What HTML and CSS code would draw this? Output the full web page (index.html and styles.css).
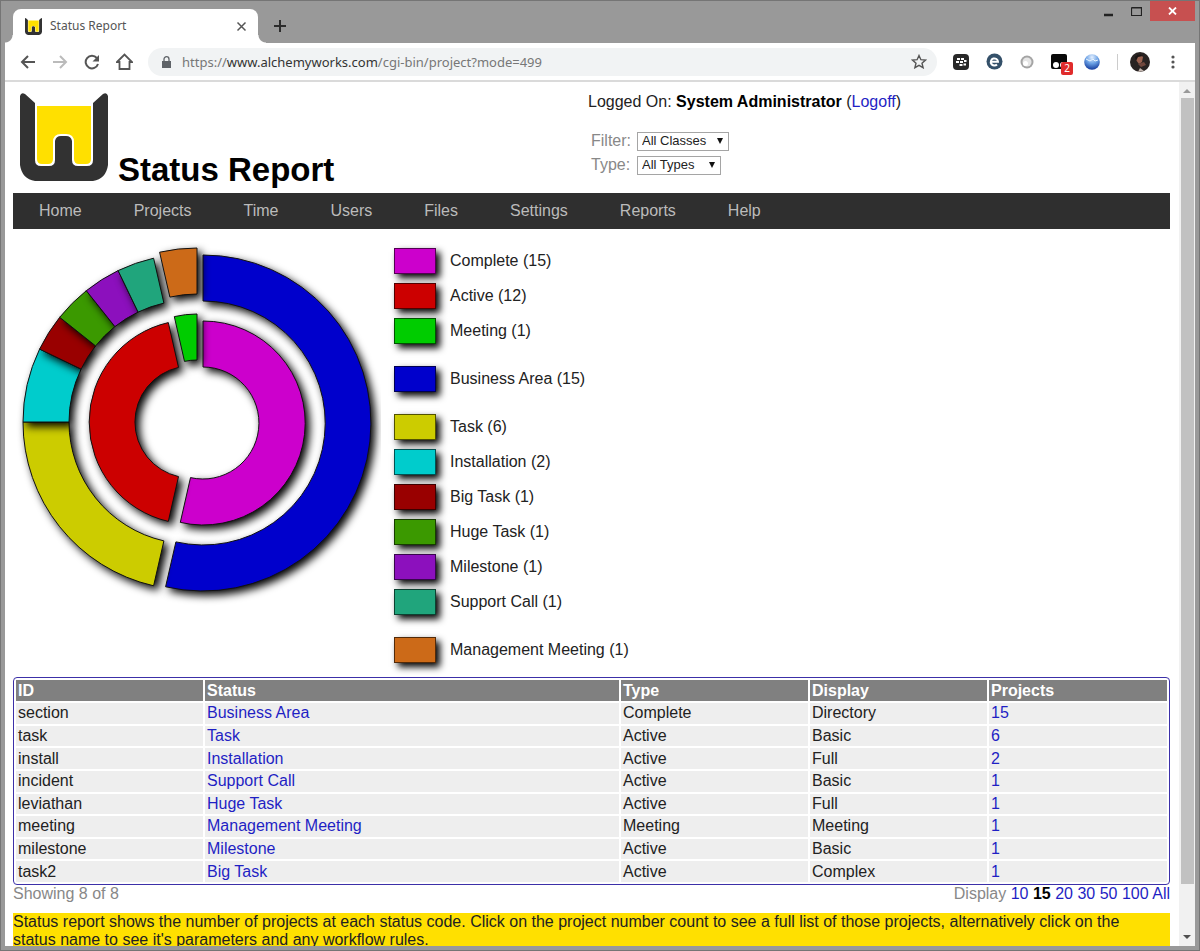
FILE: index.html
```html
<!DOCTYPE html>
<html lang="en">
<head>
<meta charset="utf-8">
<title>Status Report</title>
<link rel="stylesheet" href="styles.css">
</head>
<body>
<svg class="defs" width="0" height="0" aria-hidden="true">
  <symbol id="logo" viewBox="0 0 88 88">
    <path fill="#323232" d="M0 3Q1-1 5 1L15 10V67Q15 73 21 73H29Q35 73 35 67V48Q36 43 41 43H46Q51 43 52 48V67Q52 73 58 73H67Q73 73 73 67V10L83 1Q87-1 88 3V72Q86 86 73 88H15Q2 86 0 72Z"/>
    <path fill="#ffe000" d="M17 13H71V66Q71 71 66 71H59Q54 71 54 66V49Q54 41 46 41H41Q33 41 33 49V66Q33 71 28 71H22Q17 71 17 66Z"/>
  </symbol>
</svg>
<div class="window">
  <header class="titlebar">
    <div class="tab">
      <svg class="tab-icon" width="17" height="17"><use href="#logo"/></svg>
      <span class="tab-title">Status Report</span>
      <button class="icon-button" aria-label="Close tab"><svg width="11" height="11" viewBox="0 0 11 11"><path d="M1.500 1.500l8 8M9.500 1.500l-8 8" stroke="#555" stroke-width="1.500"/></svg></button>
    </div>
    <button class="icon-button new-tab" aria-label="New tab"><svg width="12" height="12" viewBox="0 0 12 12"><path d="M6 0v12M0 6h12" stroke="#2c2c2c" stroke-width="2"/></svg></button>
    <div class="window-buttons">
      <button class="icon-button" aria-label="Minimize"><svg width="9" height="11" viewBox="0 0 9 11"><path d="M0 9h9" stroke="#222" stroke-width="2.500"/></svg></button>
      <button class="icon-button" aria-label="Maximize"><svg width="11" height="9" viewBox="0 0 11 9"><path d="M.5 1v7.500h10V.5H.5M0 1h11" fill="none" stroke="#222" stroke-width="1.200"/></svg></button>
      <button class="icon-button close-window" aria-label="Close"><svg width="9" height="8" viewBox="0 0 9 8"><path d="M1 .5l7 7M8 .5l-7 7" stroke="#fff" stroke-width="1.800"/></svg></button>
    </div>
  </header>
  <div class="toolbar">
    <button class="icon-button" aria-label="Back"><svg width="16" height="14" viewBox="0 0 16 14"><path d="M15 7H2M8 1L2 7l6 6" fill="none" stroke="#555" stroke-width="2"/></svg></button>
    <button class="icon-button" aria-label="Forward"><svg width="16" height="14" viewBox="0 0 16 14"><path d="M1 7h13M8 1l6 6-6 6" fill="none" stroke="#bbb" stroke-width="2"/></svg></button>
    <button class="icon-button" aria-label="Reload"><svg width="16" height="16" viewBox="0 0 16 16"><path d="M12.800 4A6.300 6.300 0 1 0 14 10" fill="none" stroke="#555" stroke-width="2"/><path d="M15 1v6.500H8.500z" fill="#555"/></svg></button>
    <button class="icon-button" aria-label="Home page"><svg width="17" height="17" viewBox="0 0 17 17"><path d="M1 9l7.500-7.500L16 9h-2.500v7h-10V9z" fill="none" stroke="#555" stroke-width="1.800"/></svg></button>
    <div class="address">
      <svg width="9" height="12" viewBox="0 0 9 12"><path fill="#5f6368" d="M0 5h9v7H0z"/><path d="M2 5V3.200a2.500 2.500 0 0 1 5 0V5" fill="none" stroke="#5f6368" stroke-width="1.300"/></svg>
      <span class="url"><span>https://</span><b>www.alchemyworks.com</b><span>/cgi-bin/project?mode=499</span></span>
      <button class="icon-button" aria-label="Bookmark"><svg width="16" height="15" viewBox="0 0 16 15"><path d="M8 1.500l1.900 4.200 4.600.4L11 9.200l1.100 4.500L8 11.300l-4.100 2.400L5 9.200 1.500 6.100l4.600-.4z" fill="none" stroke="#555" stroke-width="1.400"/></svg></button>
    </div>
    <div class="extensions">
      <svg width="16" height="16" viewBox="0 0 16 16"><rect width="16" height="16" rx="4" fill="#292929"/><path stroke="#fff" stroke-width="2" d="M4 5h3M8 5h3M3 8h3M7 8h3M11 7h2.500M6.500 11h3M10.500 10.500h2.500"/></svg>
      <svg width="17" height="17" viewBox="0 0 17 17"><circle cx="8.500" cy="8.500" r="8" fill="#345069"/><path d="M5 8.800h7A3.600 3.600 0 1 0 11 11.500" fill="none" stroke="#fff" stroke-width="2"/></svg>
      <svg width="14" height="14" viewBox="0 0 14 14"><circle cx="7" cy="7" r="6.500" fill="#a4a4a4"/><circle cx="7" cy="7" r="4.500" fill="#e6e6e6"/><circle cx="5.500" cy="8.500" r="2.500" fill="#fff"/></svg>
      <span class="badged">
        <svg width="16" height="16" viewBox="0 0 16 16"><rect width="16" height="15" rx="2" fill="#080808"/><circle cx="5" cy="11" r="3" fill="#fff"/><circle cx="12" cy="11" r="3" fill="#fff"/></svg>
        <span class="badge">2</span>
      </span>
      <svg width="16" height="16" viewBox="0 0 16 16"><defs><radialGradient id="globe" cx=".5" cy=".2" r=".8"><stop offset="0" stop-color="#e4f0ff"/><stop offset=".5" stop-color="#6aa0e4"/><stop offset="1" stop-color="#143a9c"/></radialGradient></defs><circle cx="8" cy="8" r="7.800" fill="url(#globe)"/><path d="M2 5l4 2 3-2 2 2 3-1" stroke="#e8f4ff" fill="none"/></svg>
      <span class="divider"></span>
      <svg width="20" height="20" viewBox="0 0 20 20"><circle cx="10" cy="10" r="10" fill="#282322"/><path d="M6 4q4-3 7 1l-1 5-3 2-3-4z" fill="#9b6351"/><path d="M8 12l6-2 2 3-5 2z" fill="#71483e"/><path d="M8 20l2-4 4 3z" fill="#c6b9b3"/><path d="M5 5q3-5 8-1l-5 1-2 4z" fill="#181414"/></svg>
      <button class="icon-button more" aria-label="Menu"><svg width="4" height="14" viewBox="0 0 4 14" fill="#555"><circle cx="2" cy="2" r="1.600"/><circle cx="2" cy="7" r="1.600"/><circle cx="2" cy="12" r="1.600"/></svg></button>
    </div>
  </div>
  <div class="viewport">
    <main class="page">
      <div class="page-head">
        <div class="brand">
          <svg width="88" height="88" role="img" aria-label="Alchemy Works"><use href="#logo"/></svg>
          <h1>Status Report</h1>
        </div>
        <div class="session">
          <p class="login">Logged On: <strong>System Administrator</strong> (<a href="#">Logoff</a>)</p>
          <div class="field">
            <label for="filter">Filter:</label>
            <span class="select select-class"><select id="filter"><option>All Classes</option></select></span>
          </div>
          <div class="field">
            <label for="type">Type:</label>
            <span class="select select-type"><select id="type"><option>All Types</option></select></span>
          </div>
        </div>
      </div>
      <nav class="menu">
        <a href="#">Home</a><a href="#">Projects</a><a href="#">Time</a><a href="#">Users</a><a href="#">Files</a><a href="#">Settings</a><a href="#">Reports</a><a href="#">Help</a>
      </nav>
      <section class="report">
        <svg class="chart" width="368" height="368" viewBox="13 242 368 368" role="img" aria-label="Projects by status">
          <g transform="translate(203 423)">
            <path fill="#0000cc" d="M0-168A168 168 0 1 1-37.400 163.800L-27.100 118.900A122 122 0 1 0 0-122Z"/>
            <path fill="#cc00cc" d="M0-102A102 102 0 1 1-22.700 99.400L-12.500 54.600A56 56 0 1 0 0-56Z"/>
          </g>
          <g transform="translate(191 422)">
            <path fill="#cccc00" d="M-37.400 163.800A168 168 0 0 1-168 0H-122A122 122 0 0 0-27.100 118.900Z"/>
            <path fill="#00cccc" d="M-168 0A168 168 0 0 1-151.400-72.900L-109.900-52.900A122 122 0 0 0-122 0Z"/>
            <path fill="#990000" d="M-151.400-72.900A168 168 0 0 1-131.300-104.700L-95.400-76.100A122 122 0 0 0-109.900-52.900Z"/>
            <path fill="#3b9900" d="M-131.300-104.700A168 168 0 0 1-104.700-131.300L-76.100-95.400A122 122 0 0 0-95.400-76.100Z"/>
            <path fill="#8c10bd" d="M-104.700-131.300A168 168 0 0 1-72.900-151.400L-52.900-109.900A122 122 0 0 0-76.100-95.400Z"/>
            <path fill="#20a57c" d="M-72.900-151.400A168 168 0 0 1-37.400-163.800L-27.100-118.900A122 122 0 0 0-52.900-109.900Z"/>
            <path fill="#cc0000" d="M-22.700 99.400A102 102 0 0 1-22.700-99.400L-12.500-54.600A56 56 0 0 0-12.500 54.600Z"/>
          </g>
          <g transform="translate(197 416)">
            <path fill="#cc6a18" d="M-37.400-163.800A168 168 0 0 1 0-168V-122A122 122 0 0 0-27.100-118.900Z"/>
            <path fill="#00cc00" d="M-22.700-99.400A102 102 0 0 1 0-102V-56A56 56 0 0 0-12.500-54.600Z"/>
          </g>
        </svg>
        <ul class="legend">
          <li><i class="swatch complete"></i>Complete (15)</li>
          <li><i class="swatch active"></i>Active (12)</li>
          <li><i class="swatch meeting"></i>Meeting (1)</li>
          <li class="group"><i class="swatch business"></i>Business Area (15)</li>
          <li class="group"><i class="swatch task"></i>Task (6)</li>
          <li><i class="swatch installation"></i>Installation (2)</li>
          <li><i class="swatch big-task"></i>Big Task (1)</li>
          <li><i class="swatch huge-task"></i>Huge Task (1)</li>
          <li><i class="swatch milestone"></i>Milestone (1)</li>
          <li><i class="swatch support"></i>Support Call (1)</li>
          <li class="group"><i class="swatch management"></i>Management Meeting (1)</li>
        </ul>
      </section>
      <table class="statuses">
        <colgroup><col class="col-id"><col class="col-status"><col class="col-type"><col class="col-display"><col></colgroup>
        <thead><tr><th>ID</th><th>Status</th><th>Type</th><th>Display</th><th>Projects</th></tr></thead>
        <tbody>
          <tr><td>section</td><td><a href="#">Business Area</a></td><td>Complete</td><td>Directory</td><td><a href="#">15</a></td></tr>
          <tr><td>task</td><td><a href="#">Task</a></td><td>Active</td><td>Basic</td><td><a href="#">6</a></td></tr>
          <tr><td>install</td><td><a href="#">Installation</a></td><td>Active</td><td>Full</td><td><a href="#">2</a></td></tr>
          <tr><td>incident</td><td><a href="#">Support Call</a></td><td>Active</td><td>Basic</td><td><a href="#">1</a></td></tr>
          <tr><td>leviathan</td><td><a href="#">Huge Task</a></td><td>Active</td><td>Full</td><td><a href="#">1</a></td></tr>
          <tr><td>meeting</td><td><a href="#">Management Meeting</a></td><td>Meeting</td><td>Meeting</td><td><a href="#">1</a></td></tr>
          <tr><td>milestone</td><td><a href="#">Milestone</a></td><td>Active</td><td>Basic</td><td><a href="#">1</a></td></tr>
          <tr><td>task2</td><td><a href="#">Big Task</a></td><td>Active</td><td>Complex</td><td><a href="#">1</a></td></tr>
        </tbody>
      </table>
      <div class="pager">
        <span>Showing 8 of 8</span>
        <span>Display <a href="#">10</a> <strong>15</strong> <a href="#">20</a> <a href="#">30</a> <a href="#">50</a> <a href="#">100</a> <a href="#">All</a></span>
      </div>
      <p class="note">Status report shows the number of projects at each status code. Click on the project number count to see a full list of those projects, alternatively click on the status name to see it's parameters and any workflow rules.</p>
    </main>
    <div class="scrollbar" aria-hidden="true">
      <span class="arrow up"></span>
      <span class="thumb"></span>
      <span class="arrow down"></span>
    </div>
  </div>
</div>
</body>
</html>
```

FILE: styles.css
```css
* { box-sizing: border-box; }

body {
  margin: 0;
  font: 16px/18px "Liberation Sans", Arial, sans-serif;
  color: #222;
}

a { color: #1f1fc4; text-decoration: none; }
h1, p, ul { margin: 0; padding: 0; }
.defs { position: absolute; }
svg { display: block; flex: none; }

.icon-button {
  display: flex;
  align-items: center;
  justify-content: center;
  padding: 0;
  border: 0;
  background: none;
}

/* Browser window */
.window {
  display: flex;
  flex-direction: column;
  height: 100vh;
  padding: 0 4px 4px;
  border: 1px solid #757575;
  background: #999;
}

.titlebar {
  display: flex;
  flex: none;
  align-items: flex-end;
  height: 42px;
  padding-left: 8px;
}

.tab {
  position: relative;
  display: flex;
  align-items: center;
  width: 245px;
  height: 34px;
  padding: 0 11px 0 12px;
  border-radius: 8px 8px 0 0;
  background: #fff;
  font: 12px/16px "Noto Sans", sans-serif;
  color: #555;
}

.tab::before,
.tab::after {
  content: "";
  position: absolute;
  bottom: 0;
  width: 8px;
  height: 8px;
}

.tab::before { left: -8px; background: radial-gradient(circle at 0 0, transparent 7px, #fff 8px); }
.tab::after { right: -8px; background: radial-gradient(circle at 100% 0, transparent 7px, #fff 8px); }
.tab-title { flex: 1; margin-left: 8px; }
.new-tab { margin: 0 0 11px 16px; }

.window-buttons {
  display: flex;
  align-self: flex-start;
  gap: 18px;
  margin-left: auto;
}

.close-window { width: 45px; height: 20px; margin-left: -10px; background: #c75050; }

.toolbar {
  display: flex;
  flex: none;
  align-items: center;
  gap: 16px;
  height: 39px;
  padding: 0 20px 0 15px;
  border-bottom: 2px solid #dadada;
  background: #fff;
}

.address {
  display: flex;
  flex: 1;
  align-items: center;
  height: 28px;
  margin-left: -1px;
  padding: 0 10px 0 14px;
  border-radius: 14px;
  background: #f1f3f4;
}

.url { flex: 1; margin-left: 11px; font: 13px/18px "Noto Sans", sans-serif; color: #777; }
.url b { font-weight: 400; color: #333; }

.extensions { display: flex; align-items: center; gap: 17px; }
.divider { width: 1px; height: 16px; margin-right: -5px; background: #ccc; }
.more { margin-left: 4px; }
.badged { position: relative; }

.badge {
  position: absolute;
  top: 8px;
  left: 10px;
  width: 12px;
  height: 13px;
  border-radius: 2px;
  background: #e02b2b;
  font: 10px/13px "Noto Sans", sans-serif;
  color: #fff;
  text-align: center;
}

.viewport {
  display: flex;
  flex: 1;
  min-height: 0;
  background: #fff;
}

.page { flex: 1; min-width: 0; padding: 8px 9px 0 8px; overflow: hidden; }

.scrollbar {
  display: flex;
  flex-direction: column;
  align-items: center;
  width: 16px;
  background: #f1f1f1;
}

.thumb { flex: 1; width: 13px; background: #c1c1c1; }
.arrow { height: 16px; border: solid transparent; border-width: 0 4px; }
.arrow::before { content: ""; display: block; width: 0; margin: 7px -4px 0; border: 4px solid transparent; }
.up::before { margin-top: 3px; border-bottom-color: #999; }
.down { height: 62px; display: flex; align-items: flex-end; }
.down::before { margin-bottom: 3px; border-top-color: #505050; }

/* Page header */
.page-head { display: flex; height: 103px; }
.brand { display: flex; flex: 1; align-items: flex-start; gap: 10px; padding: 3px 0 0 7px; }
.brand h1 { margin-top: 59px; font-size: 33px; line-height: 36px; color: #000; }
.session { flex: 1; margin-right: 14px; }
.login { padding: 3px 0 0; }
.login strong { color: #000; }

.field { display: flex; align-items: center; height: 24px; padding-left: 3px; color: #888; }
.login + .field { margin-top: 18px; }
.field label { width: 46px; }
.select { position: relative; display: flex; height: 19px; }
.select-class { width: 92px; }
.select-type { width: 84px; }

.select select {
  appearance: none;
  width: 100%;
  padding: 0 4px;
  border: 1px solid #a5a5a5;
  border-radius: 0;
  background: #fff;
  font: 13px/16px "Liberation Sans", Arial, sans-serif;
  color: #222;
}

.select::after {
  content: "";
  position: absolute;
  top: 6px;
  right: 6px;
  border: solid transparent;
  border-width: 6px 3px 0;
  border-top-color: #111;
}

.menu { display: flex; gap: 52px; padding: 9px 26px; background: #2f2f2f; }
.menu a { color: #bbb; }

/* Chart and legend */
.report { display: flex; gap: 13px; padding-top: 13px; }
.chart path { stroke: #111; stroke-width: 1; filter: drop-shadow(4px 4px 4px #000); }

.legend { display: flex; flex-direction: column; gap: 9px; padding: 6px 0 14px; list-style: none; }
.legend li { display: flex; align-items: center; gap: 14px; height: 26px; }
.legend .group { margin-top: 13px; }
.swatch { width: 42px; height: 26px; border: 1px solid rgba(0, 0, 0, 0.6); box-shadow: 4px 4px 7px #000; }
.complete { background: #cc00cc; }
.active { background: #cc0000; }
.meeting { background: #00cc00; }
.business { background: #0000cc; }
.task { background: #cccc00; }
.installation { background: #00cccc; }
.big-task { background: #990000; }
.huge-task { background: #3b9900; }
.milestone { background: #8c10bd; }
.support { background: #20a57c; }
.management { background: #cc6a18; }

/* Status table */
.statuses {
  width: 100%;
  height: 208px;
  border: 1px solid #3c30a8;
  border-radius: 4px;
  border-collapse: separate;
  border-spacing: 2px;
  table-layout: fixed;
}

.col-id { width: 187px; }
.col-status { width: 414px; }
.col-type { width: 187px; }
.col-display { width: 177px; }
.statuses th, .statuses td { padding: 0 2px; text-align: left; }
.statuses th { height: 21px; background: #808080; color: #fff; }
.statuses td { background: #eee; }

.pager { display: flex; justify-content: space-between; color: #888; }
.pager strong { color: #000; }
.note { margin-top: 10px; padding-right: 20px; background: #ffe000; }
```
